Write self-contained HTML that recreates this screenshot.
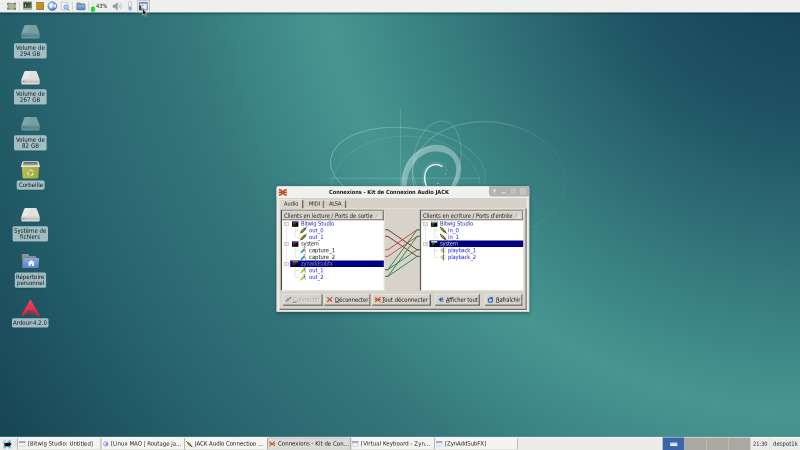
<!DOCTYPE html>
<html lang="fr">
<head>
<meta charset="utf-8">
<title>Connexions - Kit de Connexion Audio JACK</title>
<style>
html,body{margin:0;padding:0;}
body{width:800px;height:450px;overflow:hidden;position:relative;
 font-family:"DejaVu Sans Condensed","DejaVu Sans","Liberation Sans",sans-serif;font-size:5.9px;line-height:1;color:#111;
 background:#2f7478;}
*{box-sizing:border-box;}
.abs{position:absolute;}
svg{display:block;overflow:visible;}
#layer{position:absolute;left:0;top:0;width:800px;height:450px;will-change:transform;}
#bg{position:absolute;left:0;top:0;width:800px;height:450px;background:radial-gradient(circle at 823px -93px,rgb(21,66,86) 38px,rgb(21,67,87) 63px,rgb(22,68,88) 87px,rgb(23,70,90) 112px,rgb(25,73,92) 137px,rgb(26,76,94) 162px,rgb(28,79,96) 186px,rgb(30,82,98) 211px,rgb(33,87,102) 236px,rgb(36,93,106) 261px,rgb(40,99,110) 285px,rgb(44,104,114) 310px,rgb(47,110,118) 335px,rgb(50,116,122) 360px,rgb(54,122,126) 384px,rgb(57,128,130) 409px,rgb(60,134,134) 434px,rgb(64,140,138) 459px,rgb(67,145,141) 483px,rgb(71,150,144) 508px,rgb(68,145,142) 533px,rgb(65,140,139) 558px,rgb(61,135,135) 584px,rgb(58,129,131) 609px,rgb(55,123,126) 634px,rgb(52,118,123) 659px,rgb(49,114,120) 685px,rgb(47,111,118) 710px,rgb(45,108,116) 735px,rgb(43,105,114) 760px,rgb(40,101,111) 786px,rgb(38,97,108) 811px,rgb(35,93,104) 836px,rgb(33,89,101) 861px,rgb(31,84,98) 887px,rgb(29,80,94) 912px,rgb(26,76,91) 937px,rgb(24,71,88) 962px,rgb(22,68,85) 988px,rgb(21,66,83) 1013px,rgb(20,64,82) 1038px);}
#swirl{position:absolute;left:0;top:0;width:800px;height:450px;}
#top{position:absolute;left:0;top:0;width:800px;height:12.4px;background:#efefed;box-shadow:0 0 2px 1px rgba(0,30,40,.55);}
#bot{position:absolute;left:0;top:437px;width:800px;height:13px;background:#efefed;box-shadow:0 0 1px 0 rgba(0,30,40,.4);}
.lbl{position:absolute;background:rgba(205,228,230,.72);border-radius:1.6px;text-align:center;
 font-size:5.5px;line-height:6.6px;color:#10181a;padding-top:1.4px;white-space:nowrap;}
#win{position:absolute;left:0;top:0;width:800px;height:450px;}
.t{position:absolute;line-height:1;white-space:nowrap;transform-origin:0 0;}
.hdr{position:absolute;background:#d6d2ca;border:1px solid #555;border-top-color:#77756f;border-left-color:#f4f4f0;
 font-size:5.33px;padding:2px 0 0 .9px;white-space:nowrap;color:#151515;overflow:hidden;}
.list{position:absolute;background:#fff;}
.row{position:absolute;height:6.67px;white-space:nowrap;font-size:5.33px;line-height:6.67px;}
.btn{position:absolute;background:#d6d2ca;border:1px solid #4a4a48;border-top-color:#fbfbf8;border-left-color:#fbfbf8;
 font-size:5.33px;white-space:nowrap;color:#111;line-height:7.6px;}
.u{text-decoration:underline;text-decoration-thickness:.32px;text-underline-offset:.3px;text-decoration-color:rgba(40,40,40,.6);}
.tk{position:absolute;top:438.2px;height:11.4px;font-size:5.42px;line-height:11.4px;white-space:nowrap;color:#1a1a1a;overflow:hidden;}
</style>
</head>
<body>
<div id="bg"></div>
<div id="layer">
<svg id="swirl" viewBox="0 0 800 450"><defs><linearGradient id="fdR" gradientUnits="userSpaceOnUse" x1="410" y1="0" x2="570" y2="0"><stop offset="0" stop-color="#fff" stop-opacity=".42"/><stop offset=".55" stop-color="#fff" stop-opacity=".30"/><stop offset=".85" stop-color="#fff" stop-opacity=".10"/><stop offset="1" stop-color="#fff" stop-opacity=".05"/></linearGradient><linearGradient id="fdL" gradientUnits="userSpaceOnUse" x1="330" y1="0" x2="490" y2="0"><stop offset="0" stop-color="#fff" stop-opacity=".46"/><stop offset=".5" stop-color="#fff" stop-opacity=".36"/><stop offset="1" stop-color="#fff" stop-opacity=".18"/></linearGradient></defs>
<path d="M400.4 109 V200" stroke="#ffffff" stroke-width=".5" opacity=".30"/>
<path d="M329 178.2 H480" stroke="#ffffff" stroke-width=".5" opacity=".32"/>
<ellipse cx="408" cy="169" rx="78" ry="41" transform="rotate(7 408 169)" fill="none" stroke="url(#fdL)" stroke-width=".6"/>
<ellipse cx="406" cy="186" rx="74" ry="50" fill="none" stroke="#ffffff" stroke-width=".45" opacity=".22"/>
<ellipse cx="489" cy="178" rx="77" ry="56" transform="rotate(6 489 178)" fill="none" stroke="url(#fdR)" stroke-width=".6"/>
<ellipse cx="437" cy="159.5" rx="23.5" ry="39" transform="rotate(11 437 159.5)" fill="none" stroke="#ffffff" stroke-width=".55" opacity=".32"/>
<path d="M401.6 190 C399.6 170 410 149 432 145 C450 142.4 463 157 461 171 C460 180 456.6 186 452.6 190 L448.6 190 C453 184 455.6 178 456.2 170 C456.8 158.6 448 150.2 433 151.6 C416 154 406 172 406.6 190 Z" fill="#ffffff" opacity=".34"/>
<path d="M402.6 182 C403 166 412 151.6 430 147.2" fill="none" stroke="#ffffff" stroke-width="1" opacity=".18"/>
<path d="M428.8 190 C423 182 423.4 171 429.4 166.6 C433.4 163.6 438.6 164 442 166.4" fill="none" stroke="#ffffff" stroke-width="1.5" opacity=".86" stroke-linecap="round"/>
<path d="M426 190 C419 178 424 162 436 162.4 C442 162.8 446 167 447 171" fill="none" stroke="#ffffff" stroke-width=".5" opacity=".35"/>
<circle cx="445.4" cy="174" r=".5" fill="#ffffff" opacity=".7"/><circle cx="438" cy="183.4" r=".6" fill="#ffffff" opacity=".7"/><circle cx="403.4" cy="160.6" r=".4" fill="#ffffff" opacity=".6"/></svg>
<svg class="abs" style="left:20px;top:24.8px" width="21" height="15" viewBox="0 0 21 15">
 <path d="M4.3 .7 Q4.6 0 5.4 0 H15.6 Q16.4 0 16.7 .7 L19.5 8.2 H1.5 Z" fill="#7ca6a9"/>
 <path d="M11 0 H15.6 Q16.4 0 16.7 .7 L19.5 8.2 H7 Z" fill="#6d999c" opacity=".5"/>
 <path d="M1.4 8 H19.6 V12.5 Q19.6 13.5 18.6 13.5 H2.4 Q1.4 13.5 1.4 12.5 Z" fill="#699699"/>
 <rect x="1.4" y="9.5" width="18.2" height="2.5" fill="#55868b" opacity=".8"/>
 <rect x="3" y="10.2" width="1.6" height=".9" fill="#3f6f75"/>
</svg>
<svg class="abs" style="left:0;top:0" width="60" height="340" viewBox="0 0 60 340"><rect x="14.2" y="43.900000000000006" width="32.2" height="15.4" rx="1.6" fill="#0a2c36" fill-opacity=".22"/><rect x="14" y="43.2" width="32.6" height="15.4" rx="1.6" fill="#d0e4e7" fill-opacity=".74"/></svg>
<div class="t" style="left:15.90px;top:43px;line-height:7px;font-size:6.0px;color:#0c1214;transform:translateY(0.70px) rotate(.03deg);letter-spacing:0.034px;">Volume de</div>
<div class="t" style="left:20.10px;top:49px;line-height:7px;font-size:6.0px;color:#0c1214;transform:translateY(0.75px) rotate(.03deg);letter-spacing:0.083px;">294 GB</div>
<svg class="abs" style="left:20px;top:70.8px" width="21" height="15" viewBox="0 0 21 15">
 <path d="M4.3 .7 Q4.6 0 5.4 0 H15.6 Q16.4 0 16.7 .7 L19.5 8.2 H1.5 Z" fill="#e8e8e6"/>
 <path d="M11 0 H15.6 Q16.4 0 16.7 .7 L19.5 8.2 H7 Z" fill="#d8d8d6" opacity=".5"/>
 <path d="M1.4 8 H19.6 V12.5 Q19.6 13.5 18.6 13.5 H2.4 Q1.4 13.5 1.4 12.5 Z" fill="#dadad8"/>
 <rect x="1.4" y="9.5" width="18.2" height="2.5" fill="#bebebc" opacity=".8"/>
 <rect x="3" y="10.2" width="1.6" height=".9" fill="#7a7a78"/>
</svg>
<svg class="abs" style="left:0;top:0" width="60" height="340" viewBox="0 0 60 340"><rect x="14.2" y="89.9" width="32.2" height="15.4" rx="1.6" fill="#0a2c36" fill-opacity=".22"/><rect x="14" y="89.2" width="32.6" height="15.4" rx="1.6" fill="#d0e4e7" fill-opacity=".74"/></svg>
<div class="t" style="left:15.90px;top:89px;line-height:7px;font-size:6.0px;color:#0c1214;transform:translateY(0.70px) rotate(.03deg);letter-spacing:0.034px;">Volume de</div>
<div class="t" style="left:20.10px;top:95px;line-height:7px;font-size:6.0px;color:#0c1214;transform:translateY(0.75px) rotate(.03deg);letter-spacing:0.083px;">267 GB</div>
<svg class="abs" style="left:20px;top:116.8px" width="21" height="15" viewBox="0 0 21 15">
 <path d="M4.3 .7 Q4.6 0 5.4 0 H15.6 Q16.4 0 16.7 .7 L19.5 8.2 H1.5 Z" fill="#7ca6a9"/>
 <path d="M11 0 H15.6 Q16.4 0 16.7 .7 L19.5 8.2 H7 Z" fill="#6d999c" opacity=".5"/>
 <path d="M1.4 8 H19.6 V12.5 Q19.6 13.5 18.6 13.5 H2.4 Q1.4 13.5 1.4 12.5 Z" fill="#699699"/>
 <rect x="1.4" y="9.5" width="18.2" height="2.5" fill="#55868b" opacity=".8"/>
 <rect x="3" y="10.2" width="1.6" height=".9" fill="#3f6f75"/>
</svg>
<svg class="abs" style="left:0;top:0" width="60" height="340" viewBox="0 0 60 340"><rect x="14.2" y="135.89999999999998" width="32.2" height="15.4" rx="1.6" fill="#0a2c36" fill-opacity=".22"/><rect x="14" y="135.2" width="32.6" height="15.4" rx="1.6" fill="#d0e4e7" fill-opacity=".74"/></svg>
<div class="t" style="left:15.90px;top:135px;line-height:7px;font-size:6.0px;color:#0c1214;transform:translateY(0.70px) rotate(.03deg);letter-spacing:0.034px;">Volume de</div>
<div class="t" style="left:21.80px;top:141px;line-height:7px;font-size:6.0px;color:#0c1214;transform:translateY(0.75px) rotate(.03deg);letter-spacing:0.106px;">82 GB</div>
<svg class="abs" style="left:20px;top:160px" width="21" height="20" viewBox="0 0 21 20">
 <defs><linearGradient id="tin" x1="0" y1="0" x2="0" y2="1"><stop offset="0" stop-color="#5c5c5a"/><stop offset="1" stop-color="#b4b4b0"/></linearGradient>
 <linearGradient id="tbd" x1="0" y1="0" x2="1" y2="0"><stop offset="0" stop-color="#b6be52"/><stop offset="1" stop-color="#a2aa3a"/></linearGradient></defs>
 <path d="M1.8 6.6 H19.1 L18.35 17.3 Q18.25 18.5 17.1 18.5 H3.8 Q2.65 18.5 2.55 17.3 Z" fill="url(#tbd)"/>
 <path d="M3.2 1.2 H17.7 Q18.4 1.2 18.6 1.9 L20 6.4 Q20.1 7.1 19.4 7.1 H1.5 Q.8 7.1 .9 6.4 L2.3 1.9 Q2.5 1.2 3.2 1.2 Z" fill="#e6e7dc"/>
 <path d="M3.7 1.9 H17.2 L18.3 5.5 H2.6 Z" fill="url(#tin)"/>
 <circle cx="10.5" cy="12.8" r="2.7" fill="none" stroke="#e6ead0" stroke-width="1.35" stroke-dasharray="3.9 1.75" opacity=".92"/>
</svg>
<svg class="abs" style="left:0;top:0" width="60" height="340" viewBox="0 0 60 340"><rect x="16.9" y="181.1" width="27.5" height="9.3" rx="1.6" fill="#0a2c36" fill-opacity=".22"/><rect x="16.7" y="180.4" width="27.9" height="9.3" rx="1.6" fill="#d0e4e7" fill-opacity=".74"/></svg>
<div class="t" style="left:18.65px;top:180px;line-height:7px;font-size:6.0px;color:#0c1214;transform:translateY(0.90px) rotate(.03deg);letter-spacing:0.015px;">Corbeille</div>
<svg class="abs" style="left:20px;top:208.3px" width="21" height="15" viewBox="0 0 21 15">
 <path d="M4.3 .7 Q4.6 0 5.4 0 H15.6 Q16.4 0 16.7 .7 L19.5 8.2 H1.5 Z" fill="#e8e8e6"/>
 <path d="M11 0 H15.6 Q16.4 0 16.7 .7 L19.5 8.2 H7 Z" fill="#d8d8d6" opacity=".5"/>
 <path d="M1.4 8 H19.6 V12.5 Q19.6 13.5 18.6 13.5 H2.4 Q1.4 13.5 1.4 12.5 Z" fill="#dadad8"/>
 <rect x="1.4" y="9.5" width="18.2" height="2.5" fill="#bebebc" opacity=".8"/>
 <rect x="3" y="10.2" width="1.6" height=".9" fill="#7a7a78"/>
</svg>
<svg class="abs" style="left:0;top:0" width="60" height="340" viewBox="0 0 60 340"><rect x="12.799999999999999" y="226.89999999999998" width="35.0" height="15.4" rx="1.6" fill="#0a2c36" fill-opacity=".22"/><rect x="12.6" y="226.2" width="35.4" height="15.4" rx="1.6" fill="#d0e4e7" fill-opacity=".74"/></svg>
<div class="t" style="left:14.10px;top:226px;line-height:7px;font-size:6.0px;color:#0c1214;transform:translateY(0.70px) rotate(.03deg);letter-spacing:0.048px;">Système de</div>
<div class="t" style="left:20.30px;top:232px;line-height:7px;font-size:6.0px;color:#0c1214;transform:translateY(0.75px) rotate(.03deg);letter-spacing:0.044px;">fichiers</div>
<svg class="abs" style="left:20px;top:252px" width="21" height="18" viewBox="0 0 21 18">
 <defs><linearGradient id="hf" x1="0" y1="0" x2="0" y2="1"><stop offset="0" stop-color="#86ace2"/><stop offset="1" stop-color="#5585cc"/></linearGradient>
 <linearGradient id="hb" x1="0" y1="0" x2="0" y2="1"><stop offset="0" stop-color="#9a9a98"/><stop offset="1" stop-color="#565654"/></linearGradient></defs>
 <path d="M1.9 2.7 Q1.9 1.9 2.7 1.9 H8 Q8.8 1.9 8.9 2.7 L9 3.9 H15.3 Q16.1 3.9 16.1 4.7 V15.7 H1.9 Z" fill="url(#hb)"/>
 <path d="M4 6 H18.6 Q19.2 6 19.15 6.6 L18.5 15.4 Q18.45 16 17.85 16 H2.9 Q2.3 16 2.38 15.4 L3.4 6.6 Q3.45 6 4 6 Z" fill="url(#hf)"/>
 <path d="M11.3 7.9 L15 11 H14 V14 H12 V12.2 H10.6 V14 H8.6 V11 H7.6 Z" fill="#f6f9fe" opacity=".95"/>
</svg>
<svg class="abs" style="left:0;top:0" width="60" height="340" viewBox="0 0 60 340"><rect x="15.0" y="273.09999999999997" width="30.900000000000002" height="15.4" rx="1.6" fill="#0a2c36" fill-opacity=".22"/><rect x="14.8" y="272.4" width="31.3" height="15.4" rx="1.6" fill="#d0e4e7" fill-opacity=".74"/></svg>
<div class="t" style="left:16.25px;top:272px;line-height:7px;font-size:6.0px;color:#0c1214;transform:translateY(0.90px) rotate(.03deg);letter-spacing:0.030px;">Répertoire</div>
<div class="t" style="left:16.85px;top:278px;line-height:7px;font-size:6.0px;color:#0c1214;transform:translateY(0.95px) rotate(.03deg);letter-spacing:0.050px;">personnel</div>
<svg class="abs" style="left:20px;top:298px" width="21" height="19" viewBox="0 0 21 19">
 <defs><linearGradient id="ard" x1="0" y1="0" x2="0" y2="1"><stop offset="0" stop-color="#f0485f"/><stop offset="1" stop-color="#d8213f"/></linearGradient></defs>
 <path d="M10.4 1.2 L19.9 17.7 L17.2 17.7 Q14.6 12.2 10.4 12.2 Q6.2 12.2 3.6 17.7 L.9 17.7 Z" fill="url(#ard)"/>
 <path d="M5.4 16.6 V14 M6.6 15.6 V13 M7.8 16.8 V12.4 M9 15.6 V12.2 M10.2 16.9 V12 M11.4 15.2 V12 M12.6 16.9 V12.2 M13.8 15.6 V12.6 M15 16.6 V13.6" stroke="#d42a4a" stroke-width=".75" opacity=".9"/>
</svg>
<svg class="abs" style="left:0;top:0" width="60" height="340" viewBox="0 0 60 340"><rect x="12.2" y="318.9" width="36.1" height="9.4" rx="1.6" fill="#0a2c36" fill-opacity=".22"/><rect x="12" y="318.2" width="36.5" height="9.4" rx="1.6" fill="#d0e4e7" fill-opacity=".74"/></svg>
<div class="t" style="left:13.25px;top:318px;line-height:7px;font-size:6.0px;color:#0c1214;transform:translateY(0.70px) rotate(.03deg);letter-spacing:0.045px;">Ardour-4.2.0</div>
<svg class="abs" style="left:0;top:0" width="800" height="18" viewBox="0 0 800 18"><defs><linearGradient id="tsh" x1="0" y1="0" x2="0" y2="1"><stop offset="0" stop-color="#062830" stop-opacity=".62"/><stop offset=".45" stop-color="#062830" stop-opacity=".28"/><stop offset="1" stop-color="#062830" stop-opacity="0"/></linearGradient></defs><rect x="0" y="12.3" width="800" height="3.4" fill="url(#tsh)"/><rect x="0" y="0" width="800" height="12.45" fill="#efefed"/></svg>
<svg class="abs" style="left:0;top:0" width="160" height="18" viewBox="0 0 160 18">
 <defs>
  <radialGradient id="glb" cx="40%" cy="35%" r="65%"><stop offset="0" stop-color="#e4effc"/><stop offset=".55" stop-color="#86afe2"/><stop offset="1" stop-color="#3f6fb8"/></radialGradient>
  <linearGradient id="fld" x1="0" y1="0" x2="0" y2="1"><stop offset="0" stop-color="#9dbde6"/><stop offset="1" stop-color="#4f80c4"/></linearGradient>
  <linearGradient id="trm" x1="0" y1="0" x2="1" y2="1"><stop offset="0" stop-color="#1f3a22"/><stop offset="1" stop-color="#4f7a48"/></linearGradient>
 </defs>
 <rect x="2.6" y="3.2" width="1.2" height="1.2" fill="#dcdcda"/><rect x="2.6" y="7.2" width="1.2" height="1.2" fill="#dcdcda"/>
 <rect x="7.1" y="2.8" width="2.4" height="2" rx=".5" fill="#5670a6"/><rect x="13.6" y="2.8" width="2.4" height="2" rx=".5" fill="#5670a6"/><rect x="7.1" y="7.8" width="2.4" height="2" rx=".5" fill="#5670a6"/><rect x="13.6" y="7.8" width="2.4" height="2" rx=".5" fill="#5670a6"/>
 <rect x="8" y="3.5" width="7.1" height="5.6" rx="1.3" fill="#b0b890" stroke="#7d8458" stroke-width=".7"/>
 <rect x="18.9" y="1.5" width=".8" height="9.2" fill="#cfcfcc"/>
 <rect x="72.2" y="1.5" width=".8" height="9.2" fill="#cfcfcc"/>
 <rect x="88" y="1.5" width=".8" height="9.2" fill="#cfcfcc"/>
 <rect x="23" y="1.6" width="9" height="7" rx=".6" fill="#8a8c88"/>
 <rect x="23.9" y="2.6" width="7.2" height="5.2" fill="url(#trm)"/>
 <rect x="25" y="4.6" width=".8" height="2" fill="#d8ead0"/>
 <rect x="23" y="8.4" width="9" height="1.4" fill="#a0a29e"/>
 <rect x="36.2" y="1.9" width="7.8" height="8" rx=".5" fill="#a5832a"/>
 <rect x="37" y="2.7" width="6.2" height="6.4" fill="#b8922f"/>
 <rect x="37.4" y="4.9" width="5.4" height=".7" fill="#d4a02a"/><rect x="37.4" y="7.1" width="5.4" height=".7" fill="#cc982a"/><rect x="37.4" y="5.8" width="5.4" height=".5" fill="#9a7824"/>
 <circle cx="52.3" cy="6.1" r="4.4" fill="url(#glb)" stroke="#3c68b0" stroke-width=".5"/>
 <path d="M49.6 3.4 L53.2 4 L52.4 6.4 L50.6 8.4 L49.2 5.8 Z M53.8 5.2 L55.8 4 L56 7.2 L54.4 7.8 Z" fill="#f6f9fe" opacity=".92"/>
 <rect x="61.2" y="2.2" width="6.6" height="7.6" fill="#f8f8f8" stroke="#b4b4b2" stroke-width=".6"/>
 <circle cx="66" cy="7" r="2.3" fill="#a9c8ec" stroke="#6e9ad2" stroke-width=".7"/>
 <path d="M67.6 8.7 L69.4 10.5" stroke="#777" stroke-width="1"/>
 <path d="M76.6 2.6 h3.6 l.8 1 h4 v6 h-8.4 z" fill="#8e8e8c"/>
 <rect x="76.9" y="4.4" width="8.2" height="5.4" rx=".5" fill="url(#fld)" stroke="#3e6cb0" stroke-width=".5"/>
 <rect x="92.2" y="1.2" width="1.2" height="10" fill="#dededc"/>
 <rect x="90.9" y="6.8" width="4" height="5" rx="1" fill="#19df22"/>
 <path d="M113 5 h1.8 l2.6 -2.4 v7.4 l-2.6 -2.4 h-1.8 z" fill="#9a9a98" stroke="#7e7e7c" stroke-width=".4"/>
 <path d="M119 4.2 q1.6 1.8 0 3.8 M120.4 3.2 q2.4 2.9 0 5.8" stroke="#9db9e2" stroke-width=".8" fill="none"/>
 <rect x="128.6" y="1.4" width="3" height="9.2" rx="1.4" fill="#f4f4f4" stroke="#a8a8a6" stroke-width=".6"/>
 <rect x="129.3" y="6.2" width="1.6" height="3.8" rx=".7" fill="#5a8ed6"/>
 <rect x="137.2" y="0" width="12.8" height="12.4" fill="#bdbdbb"/>
 <rect x="138" y=".6" width="11.2" height="11.4" fill="#e3e3e1"/>
 <rect x="139.2" y="2.2" width="8.4" height="8" fill="#4c7cc0"/>
 <rect x="140" y="3.6" width="6.8" height="5.8" fill="#e8e8e6"/>
 <rect x="139.2" y="5.6" width="4.6" height="4.6" fill="#3b3f44"/>
 <rect x="141.2" y="6" width="4" height="2.6" fill="#f4f4f4"/>
 <circle cx="142.4" cy="8.4" r="1.1" fill="#88a4cc"/>
 <path d="M142.6 8.8 L142.6 15.2 L144 13.9 L145.1 16.2 L146.2 15.7 L145.1 13.5 L147 13.4 Z" fill="#0a0a0a" stroke="#f4f4f4" stroke-width=".5"/>
</svg>
<div class="t" style="left:95.60px;top:3px;line-height:6px;font-size:5.7px;color:#1c1c1c;transform:translateY(0.00px) rotate(.03deg);letter-spacing:-0.032px;">43%</div>

<svg class="abs" style="left:0;top:432px" width="800" height="18" viewBox="0 0 800 18"><rect x="0" y="4.4" width="800" height=".6" fill="#0a3038" opacity=".35"/><rect x="0" y="4.9" width="800" height="13.1" fill="#ececea"/><rect x="0" y="4.9" width="800" height=".6" fill="#fbfbfa"/></svg>
<svg class="abs" style="left:1.8px;top:438.9px" width="10.8" height="10.8" viewBox="0 0 10.4 10.4">
 <path d="M1.8 1.6 L8.2 8.8 M8 1.6 L1.8 8.8" stroke="#6cc4ea" stroke-width="2.5" stroke-linecap="butt"/>
 <path d="M1.4 1.6 L4.6 4.4" stroke="#c6e6f6" stroke-width="1.6"/>
 <path d="M.8 3 L2.6 4.4 Q3.4 3.6 5 3.9 L6.6 3.9 L7.4 2.8 L8 3.9 Q8.8 4.2 9.4 5.3 L8.2 5.6 L7.8 7 H2.8 Q2 6 2.4 5 Z" fill="#060606"/>
</svg>
<svg class="abs" style="left:14.8px;top:440.8px" width="2" height="6" viewBox="0 0 2 6"><rect x=".2" y="0" width="1.3" height="5.6" fill="#d6d6d3"/></svg>
<svg class="abs" style="left:0;top:0" width="800" height="450" viewBox="0 0 800 450"><rect x="17.70" y="437.7" width="83.30" height="12.3" fill="#f4f4f2"/><rect x="17.48" y="438" width=".45" height="11.4" fill="#7e7e7c"/><rect x="100.78" y="438" width=".45" height="11.4" fill="#7e7e7c"/><rect x="17.70" y="449.2" width="83.30" height=".5" fill="#cfcfcc"/></svg>
<svg class="abs" style="left:19.00px;top:440.6px" width="6.4" height="6" viewBox="0 0 6.4 6"><rect x=".3" y=".3" width="5.8" height="5.4" fill="#efefed" stroke="#c2c6cc" stroke-width=".5"/><rect x=".2" y=".2" width="6" height="1.7" fill="#8ea6d2"/></svg>
<div class="t" style="left:28.10px;top:439px;line-height:7px;font-size:6.0px;color:#161616;transform:translateY(0.60px) rotate(.03deg);letter-spacing:0.013px;">[Bitwig Studio: Untitled]</div>
<svg class="abs" style="left:0;top:0" width="800" height="450" viewBox="0 0 800 450"><rect x="101.00" y="437.7" width="83.30" height="12.3" fill="#f4f4f2"/><rect x="100.78" y="438" width=".45" height="11.4" fill="#7e7e7c"/><rect x="184.08" y="438" width=".45" height="11.4" fill="#7e7e7c"/><rect x="101.00" y="449.2" width="83.30" height=".5" fill="#cfcfcc"/></svg>
<svg class="abs" style="left:102.60px;top:441.2px" width="5.6" height="5.6" viewBox="0 0 5.6 5.6"><circle cx="2.8" cy="2.8" r="2.6" fill="#9c9cea"/><path d="M1 2.2 Q2.4 .6 3.6 1.6 Q3 3.6 1.8 4.4 Q.8 3.6 1 2.2 Z" fill="#ececfb"/><circle cx="4" cy="3" r=".9" fill="#7c7ce0"/></svg>
<div class="t" style="left:111.00px;top:439px;line-height:7px;font-size:6.0px;color:#161616;transform:translateY(0.60px) rotate(.03deg);letter-spacing:0.004px;">[Linux MAO | Routage ja...</div>
<svg class="abs" style="left:0;top:0" width="800" height="450" viewBox="0 0 800 450"><rect x="184.30" y="437.7" width="83.30" height="12.3" fill="#f4f4f2"/><rect x="184.08" y="438" width=".45" height="11.4" fill="#7e7e7c"/><rect x="267.38" y="438" width=".45" height="11.4" fill="#7e7e7c"/><rect x="184.30" y="449.2" width="83.30" height=".5" fill="#cfcfcc"/></svg>
<svg class="abs" style="left:185.80px;top:440.6px" width="6.6" height="6.4" viewBox="0 0 6.6 6.4"><path d="M.3 .3 L1.8 1.8" stroke="#222" stroke-width=".8"/><path d="M1.8 1.8 L4.4 4.2" stroke="#8a7a30" stroke-width="1.9" stroke-linecap="round"/><path d="M4.4 4.2 L6.4 6.2" stroke="#222" stroke-width=".9"/></svg>
<div class="t" style="left:194.75px;top:439px;line-height:7px;font-size:6.0px;color:#161616;transform:translateY(0.60px) rotate(.03deg);letter-spacing:-0.008px;">JACK Audio Connection ...</div>
<svg class="abs" style="left:0;top:0" width="800" height="450" viewBox="0 0 800 450"><rect x="267.60" y="437.7" width="83.30" height="12.3" fill="#dbdbd8"/><rect x="267.38" y="438" width=".45" height="11.4" fill="#7e7e7c"/><rect x="350.68" y="438" width=".45" height="11.4" fill="#7e7e7c"/><rect x="267.60" y="449.2" width="83.30" height=".5" fill="#cfcfcc"/><rect x="267.80" y="437.7" width="82.90" height=".6" fill="#b4b4b1"/></svg>
<svg class="abs" style="left:269.00px;top:440.8px" width="6.4" height="5.6" viewBox="0 0 9 7.4"><path d="M.6 1 Q3 1 4.5 3.7 Q6 1 8.4 1 M.6 6.4 Q3 6.4 4.5 3.7 Q6 6.4 8.4 6.4 M.4 3.7 H8.6" stroke="#d04a12" stroke-width="1.35" fill="none"/></svg>
<div class="t" style="left:277.50px;top:439px;line-height:7px;font-size:6.0px;color:#161616;transform:translateY(0.60px) rotate(.03deg);letter-spacing:0.046px;">Connexions - Kit de Con...</div>
<svg class="abs" style="left:0;top:0" width="800" height="450" viewBox="0 0 800 450"><rect x="350.90" y="437.7" width="83.30" height="12.3" fill="#f4f4f2"/><rect x="350.68" y="438" width=".45" height="11.4" fill="#7e7e7c"/><rect x="433.98" y="438" width=".45" height="11.4" fill="#7e7e7c"/><rect x="350.90" y="449.2" width="83.30" height=".5" fill="#cfcfcc"/></svg>
<svg class="abs" style="left:352.20px;top:440.6px" width="6.4" height="6" viewBox="0 0 6.4 6"><rect x=".3" y=".3" width="5.8" height="5.4" fill="#efefed" stroke="#c2c6cc" stroke-width=".5"/><rect x=".2" y=".2" width="6" height="1.7" fill="#8ea6d2"/></svg>
<div class="t" style="left:361.20px;top:439px;line-height:7px;font-size:6.0px;color:#161616;transform:translateY(0.60px) rotate(.03deg);letter-spacing:0.061px;">[Virtual Keyboard - Zyn...</div>
<svg class="abs" style="left:0;top:0" width="800" height="450" viewBox="0 0 800 450"><rect x="434.20" y="437.7" width="83.30" height="12.3" fill="#f4f4f2"/><rect x="433.98" y="438" width=".45" height="11.4" fill="#7e7e7c"/><rect x="517.28" y="438" width=".45" height="11.4" fill="#7e7e7c"/><rect x="434.20" y="449.2" width="83.30" height=".5" fill="#cfcfcc"/></svg>
<svg class="abs" style="left:435.50px;top:440.6px" width="6.4" height="6" viewBox="0 0 6.4 6"><rect x=".3" y=".3" width="5.8" height="5.4" fill="#efefed" stroke="#c2c6cc" stroke-width=".5"/><rect x=".2" y=".2" width="6" height="1.7" fill="#8ea6d2"/></svg>
<div class="t" style="left:445.00px;top:439px;line-height:7px;font-size:6.0px;color:#161616;transform:translateY(0.60px) rotate(.03deg);letter-spacing:-0.081px;">[ZynAddSubFX]</div>
<svg class="abs" style="left:0;top:432px" width="800" height="18" viewBox="0 432 800 18"><rect x="662.75" y="437.55" width="87.60" height="12.5" fill="#a9a8a1"/><rect x="662.75" y="437.55" width="21.60" height="12.5" fill="#3c64a8"/><rect x="684.35" y="437.55" width=".55" height="12.5" fill="#c9c8c1"/><rect x="706.25" y="437.55" width=".55" height="12.5" fill="#c9c8c1"/><rect x="728.15" y="437.55" width=".55" height="12.5" fill="#c9c8c1"/><rect x="670.2" y="442.7" width="7.1" height="3.4" fill="#e4ecf9"/><rect x="670.2" y="442.7" width="7.1" height=".9" fill="#a9c3ee"/></svg>
<div class="t" style="left:752.70px;top:440px;line-height:6px;font-size:5.6px;color:#1c1c1c;transform:translateY(0.70px) rotate(.03deg);letter-spacing:0.017px;">21:30</div>
<svg class="abs" style="left:769px;top:438px" width="3" height="12" viewBox="0 0 3 12"><rect x=".5" y=".2" width="1.7" height="12" rx=".6" fill="#f8f8f6" stroke="#c4c4c1" stroke-width=".4"/></svg>
<div class="t" style="left:773.30px;top:439px;line-height:7px;font-size:5.93px;color:#1c1c1c;transform:translateY(0.70px) rotate(.03deg);letter-spacing:0.015px;">despot1k</div>
<div id="win">
<div class="abs" style="left:276.6px;top:186px;width:252.60px;height:125.70px;border-radius:2px 2px 0 0;box-shadow:0 1px 4px rgba(0,20,30,.45)"></div>
<svg class="abs" style="left:0;top:0" width="800" height="450" viewBox="0 0 800 450">
<path d="M276.6 311.7 V188 Q276.6 186 278.6 186 H527.2 Q529.2 186 529.2 188 V311.7 Z" fill="#ecece9"/>
<path d="M276.6 198 V188 Q276.6 186 278.6 186 H527.2 Q529.2 186 529.2 188 V198 Z" fill="#f0f0ee"/>
<rect x="278.20" y="186.00" width="249.40" height="0.60" fill="#d6d6d3"/>
<rect x="276.60" y="188.00" width="0.60" height="123.70" fill="#cfcfcb"/>
<rect x="528.60" y="197.00" width="0.60" height="114.70" fill="#d6d6d2"/>
<rect x="276.60" y="311.10" width="252.60" height="0.60" fill="#d6d6d2"/>
<path d="M489 186 H527.2 Q529.2 186 529.2 188 V196.5 H492 Q489 196.5 489 193.5 Z" fill="#b3b3af"/>
<g transform="translate(489 186)"><circle cx="5.6" cy="4.5" r="1.4" fill="#dededc"/><path d="M5.6 5.4 V6.8" stroke="#dededc" stroke-width=".7"/><rect x="12.6" y="6.2" width="4" height="1.2" fill="#e6e6e4"/><path d="M22.4 3.4 H26.4 V7.4 H22.4 Z M23.2 4.2 L25.6 6.6 M25.6 4.2 L23.2 6.6" stroke="#d8d8d6" stroke-width=".6" fill="none"/><path d="M31.4 3.2 H36.2 V7.8 H31.4 Z M32.4 4.2 L35.2 6.8 M35.2 4.2 L32.4 6.8" stroke="#dcdcda" stroke-width=".7" fill="none"/></g>
<rect x="279.20" y="198.00" width="247.50" height="111.85" fill="#d5d1c9" />
<rect x="279.20" y="208.00" width="247.50" height="101.85" fill="#d7d3cb" />
<rect x="303.00" y="207.97" width="223.00" height="0.45" fill="#eceae4"/>
<rect x="525.68" y="208.40" width="0.85" height="101.40" fill="#5a5a55"/>
<rect x="279.40" y="308.97" width="247.10" height="0.85" fill="#5a5a55"/>
<rect x="525.25" y="208.60" width="0.40" height="100.40" fill="#9a9890"/>
<rect x="279.80" y="308.55" width="245.80" height="0.40" fill="#9a9890"/>
<rect x="279.27" y="208.00" width="0.45" height="101.40" fill="#f2f0ea"/>
<rect x="279.80" y="199.50" width="22.50" height="9.10" fill="#dad6ce" />
<rect x="279.72" y="199.60" width="0.45" height="8.80" fill="#faf9f5"/>
<rect x="279.80" y="199.47" width="22.40" height="0.45" fill="#faf9f5"/>
<rect x="302.18" y="200.20" width="1.05" height="7.90" fill="#55534e"/>
<rect x="303.25" y="200.60" width="0.50" height="7.50" fill="#a09e96"/>
<rect x="322.82" y="200.80" width="0.95" height="7.10" fill="#55534e"/>
<rect x="323.77" y="201.00" width="0.45" height="6.90" fill="#a09e96"/>
<rect x="344.92" y="200.80" width="0.95" height="7.10" fill="#55534e"/>
<rect x="345.88" y="201.00" width="0.45" height="6.90" fill="#a09e96"/>
<rect x="304.40" y="200.50" width="18.20" height="0.40" fill="#f0eee8"/>
<rect x="325.00" y="200.50" width="19.80" height="0.40" fill="#f0eee8"/>
<rect x="280.62" y="210.00" width="0.45" height="80.80" fill="#8c8a84"/>
<rect x="280.70" y="209.75" width="103.70" height="0.40" fill="#8c8a84"/>
<rect x="281.10" y="210.10" width="1.00" height="80.30" fill="#3c3a36"/>
<rect x="281.20" y="210.10" width="102.80" height="0.70" fill="#5c5a55"/>
<rect x="282.10" y="210.80" width="101.70" height="9.60" fill="#d6d2ca" />
<rect x="282.10" y="210.85" width="101.10" height="0.40" fill="#f4f2ec"/>
<rect x="282.15" y="210.80" width="0.40" height="8.80" fill="#f4f2ec"/>
<rect x="282.10" y="219.50" width="101.70" height="0.90" fill="#55534e"/>
<rect x="383.00" y="210.90" width="0.80" height="9.50" fill="#55534e"/>
<rect x="282.60" y="219.10" width="100.40" height="0.40" fill="#8e8c85"/>
<rect x="382.60" y="211.30" width="0.40" height="8.30" fill="#8e8c85"/>
<rect x="282.10" y="220.40" width="101.70" height="69.95" fill="#ffffff" />
<rect x="383.85" y="210.20" width="0.80" height="80.70" fill="#e7e4dd"/>
<rect x="281.10" y="290.35" width="103.50" height="0.70" fill="#e7e4dd"/>
<path d="M375.80 217.5 L378.20 213.6" stroke="#8a8882" stroke-width=".5" fill="none"/><path d="M378.20 213.6 L380.60 217.5 H375.80" stroke="#fbfaf6" stroke-width=".5" fill="none"/>
<rect x="419.77" y="210.00" width="0.45" height="80.80" fill="#8c8a84"/>
<rect x="419.85" y="209.75" width="103.95" height="0.40" fill="#8c8a84"/>
<rect x="420.25" y="210.10" width="1.00" height="80.30" fill="#3c3a36"/>
<rect x="420.35" y="210.10" width="103.05" height="0.70" fill="#5c5a55"/>
<rect x="421.25" y="210.80" width="101.95" height="9.60" fill="#d6d2ca" />
<rect x="421.25" y="210.85" width="101.35" height="0.40" fill="#f4f2ec"/>
<rect x="421.30" y="210.80" width="0.40" height="8.80" fill="#f4f2ec"/>
<rect x="421.25" y="219.50" width="101.95" height="0.90" fill="#55534e"/>
<rect x="522.40" y="210.90" width="0.80" height="9.50" fill="#55534e"/>
<rect x="421.75" y="219.10" width="100.65" height="0.40" fill="#8e8c85"/>
<rect x="522.00" y="211.30" width="0.40" height="8.30" fill="#8e8c85"/>
<rect x="421.25" y="220.40" width="101.95" height="69.95" fill="#ffffff" />
<rect x="523.25" y="210.20" width="0.80" height="80.70" fill="#e7e4dd"/>
<rect x="420.25" y="290.35" width="103.75" height="0.70" fill="#e7e4dd"/>
<path d="M515.20 217.5 L517.60 213.6" stroke="#8a8882" stroke-width=".5" fill="none"/><path d="M517.60 213.6 L520.00 217.5 H515.20" stroke="#fbfaf6" stroke-width=".5" fill="none"/>
<rect x="290.20" y="260.50" width="93.60" height="6.52" fill="#000080" />
<rect x="429.50" y="240.50" width="93.70" height="6.52" fill="#000080" />
<rect x="286.19" y="225.85" width="0.42" height="36.00" fill="#c9c9c9"/>
<rect x="294.89" y="226.65" width="0.42" height="10.53" fill="#c9c9c9"/>
<rect x="295.10" y="230.31" width="4.60" height="0.42" fill="#c9c9c9"/>
<rect x="295.10" y="236.97" width="4.60" height="0.42" fill="#c9c9c9"/>
<rect x="284.30" y="222.30" width="4.3" height="3.4" fill="#fff" stroke="#b2b2b2" stroke-width=".6"/><path d="M285.50 224.00 H287.40" stroke="#5a5a5a" stroke-width=".42"/>
<rect x="294.89" y="246.65" width="0.42" height="10.53" fill="#c9c9c9"/>
<rect x="295.10" y="250.31" width="4.60" height="0.42" fill="#c9c9c9"/>
<rect x="295.10" y="256.98" width="4.60" height="0.42" fill="#c9c9c9"/>
<rect x="284.30" y="242.30" width="4.3" height="3.4" fill="#fff" stroke="#b2b2b2" stroke-width=".6"/><path d="M285.50 244.00 H287.40" stroke="#5a5a5a" stroke-width=".42"/>
<rect x="294.89" y="266.65" width="0.42" height="10.53" fill="#c9c9c9"/>
<rect x="295.10" y="270.31" width="4.60" height="0.42" fill="#c9c9c9"/>
<rect x="295.10" y="276.98" width="4.60" height="0.42" fill="#c9c9c9"/>
<rect x="284.30" y="262.30" width="4.3" height="3.4" fill="#fff" stroke="#b2b2b2" stroke-width=".6"/><path d="M285.50 264.00 H287.40" stroke="#5a5a5a" stroke-width=".42"/>
<rect x="425.39" y="225.85" width="0.42" height="16.00" fill="#c9c9c9"/>
<rect x="434.09" y="226.65" width="0.42" height="10.53" fill="#c9c9c9"/>
<rect x="434.30" y="230.31" width="4.60" height="0.42" fill="#c9c9c9"/>
<rect x="434.30" y="236.97" width="4.60" height="0.42" fill="#c9c9c9"/>
<rect x="423.50" y="222.30" width="4.3" height="3.4" fill="#fff" stroke="#b2b2b2" stroke-width=".6"/><path d="M424.70 224.00 H426.60" stroke="#5a5a5a" stroke-width=".42"/>
<rect x="434.09" y="246.65" width="0.42" height="10.53" fill="#c9c9c9"/>
<rect x="434.30" y="250.31" width="4.60" height="0.42" fill="#c9c9c9"/>
<rect x="434.30" y="256.98" width="4.60" height="0.42" fill="#c9c9c9"/>
<rect x="423.50" y="242.30" width="4.3" height="3.4" fill="#fff" stroke="#b2b2b2" stroke-width=".6"/><path d="M424.70 244.00 H426.60" stroke="#5a5a5a" stroke-width=".42"/>
<path d="M385.3 229.72 H387.90 L417.10 249.72 H419.7" stroke="#7a3030" fill="none" stroke-width=".95"/>
<path d="M385.3 236.38 H387.90 L417.10 256.38 H419.7" stroke="#7a3030" fill="none" stroke-width=".95"/>
<path d="M385.3 249.72 H387.90 L417.10 229.72 H419.7" stroke="#c44444" fill="none" stroke-width=".95"/>
<path d="M385.3 256.38 H387.90 L417.10 236.38 H419.7" stroke="#c44444" fill="none" stroke-width=".95"/>
<path d="M385.3 269.72 H387.90 L417.10 229.72 H419.7" stroke="#2f7f45" fill="none" stroke-width=".95"/>
<path d="M385.3 269.72 H387.90 L417.10 249.72 H419.7" stroke="#2f7f45" fill="none" stroke-width=".95"/>
<path d="M385.3 276.39 H387.90 L417.10 236.38 H419.7" stroke="#2f7f45" fill="none" stroke-width=".95"/>
<path d="M385.3 276.39 H387.90 L417.10 256.38 H419.7" stroke="#2f7f45" fill="none" stroke-width=".95"/>
<rect x="282.90" y="294.30" width="39.60" height="11.30" fill="#d6d2ca" />
<rect x="282.90" y="294.27" width="39.20" height="0.45" fill="#fcfcf9"/>
<rect x="282.87" y="294.30" width="0.45" height="10.90" fill="#fcfcf9"/>
<rect x="282.90" y="304.80" width="39.60" height="0.80" fill="#4a4a47"/>
<rect x="321.70" y="294.30" width="0.80" height="11.30" fill="#4a4a47"/>
<rect x="283.40" y="304.40" width="38.30" height="0.40" fill="#8e8c85"/>
<rect x="321.30" y="294.80" width="0.40" height="10.00" fill="#8e8c85"/>
<rect x="324.20" y="294.30" width="46.10" height="11.30" fill="#d6d2ca" />
<rect x="324.20" y="294.27" width="45.70" height="0.45" fill="#fcfcf9"/>
<rect x="324.17" y="294.30" width="0.45" height="10.90" fill="#fcfcf9"/>
<rect x="324.20" y="304.80" width="46.10" height="0.80" fill="#4a4a47"/>
<rect x="369.50" y="294.30" width="0.80" height="11.30" fill="#4a4a47"/>
<rect x="324.70" y="304.40" width="44.80" height="0.40" fill="#8e8c85"/>
<rect x="369.10" y="294.80" width="0.40" height="10.00" fill="#8e8c85"/>
<rect x="372.10" y="294.30" width="58.60" height="11.30" fill="#d6d2ca" />
<rect x="372.10" y="294.27" width="58.20" height="0.45" fill="#fcfcf9"/>
<rect x="372.07" y="294.30" width="0.45" height="10.90" fill="#fcfcf9"/>
<rect x="372.10" y="304.80" width="58.60" height="0.80" fill="#4a4a47"/>
<rect x="429.90" y="294.30" width="0.80" height="11.30" fill="#4a4a47"/>
<rect x="372.60" y="304.40" width="57.30" height="0.40" fill="#8e8c85"/>
<rect x="429.50" y="294.80" width="0.40" height="10.00" fill="#8e8c85"/>
<rect x="435.10" y="294.30" width="44.60" height="11.30" fill="#d6d2ca" />
<rect x="435.10" y="294.27" width="44.20" height="0.45" fill="#fcfcf9"/>
<rect x="435.07" y="294.30" width="0.45" height="10.90" fill="#fcfcf9"/>
<rect x="435.10" y="304.80" width="44.60" height="0.80" fill="#4a4a47"/>
<rect x="478.90" y="294.30" width="0.80" height="11.30" fill="#4a4a47"/>
<rect x="435.60" y="304.40" width="43.30" height="0.40" fill="#8e8c85"/>
<rect x="478.50" y="294.80" width="0.40" height="10.00" fill="#8e8c85"/>
<rect x="485.00" y="294.30" width="37.30" height="11.30" fill="#d6d2ca" />
<rect x="485.00" y="294.27" width="36.90" height="0.45" fill="#fcfcf9"/>
<rect x="484.97" y="294.30" width="0.45" height="10.90" fill="#fcfcf9"/>
<rect x="485.00" y="304.80" width="37.30" height="0.80" fill="#4a4a47"/>
<rect x="521.50" y="294.30" width="0.80" height="11.30" fill="#4a4a47"/>
<rect x="485.50" y="304.40" width="36.00" height="0.40" fill="#8e8c85"/>
<rect x="521.10" y="294.80" width="0.40" height="10.00" fill="#8e8c85"/>
<g transform="translate(285.6 296.6)"><path d="M.3 4.9 L5.5 .5" stroke="#8a8882" stroke-width="1.25" fill="none"/><path d="M1.6 1.6 L3.4 4.2" stroke="#9a9892" stroke-width=".9" fill="none"/></g>
<g transform="translate(326.8 296.8)"><path d="M.6 .7 L5.2 4.9 M5.3 .5 L.5 5" stroke="#cc4416" stroke-width="1.1" fill="none"/></g>
<g transform="translate(374.6 296.6)"><path d="M.6 .8 L5.8 5.2 M5.8 .8 L.6 5.2" stroke="#cc4416" stroke-width="1.1" fill="none"/><path d="M.2 3 H2 M4.4 3 H6.2" stroke="#b43010" stroke-width=".8"/></g>
<g transform="translate(438.4 297.2)"><path d="M.2 2.4 L2.6 .2 V4.6 Z" fill="#1c64c8"/><path d="M2.4 .9 H4.8 M2.4 3.9 H4.8 M2.4 2.4 H5" stroke="#1c64c8" stroke-width=".95"/></g>
<g transform="translate(487.4 296.4)"><circle cx="3" cy="3.8" r="2.1" fill="none" stroke="#1c64c8" stroke-width="1.15"/><path d="M3 .3 L5.6 .5 L4.4 2.6 Z" fill="#1c64c8"/></g>
<g transform="translate(278.3 188.7)"><path d="M.6 1 Q3 1 4.5 3.7 Q6 1 8.4 1 M.6 6.4 Q3 6.4 4.5 3.7 Q6 6.4 8.4 6.4 M.4 3.7 H8.6" stroke="#7a3210" stroke-width="1.9" fill="none" opacity=".45"/><path d="M.6 1 Q3 1 4.5 3.7 Q6 1 8.4 1 M.6 6.4 Q3 6.4 4.5 3.7 Q6 6.4 8.4 6.4 M.4 3.7 H8.6" stroke="#d04a12" stroke-width="1.3" fill="none"/></g>
</svg>
<div class="t" style="left:329.20px;top:189px;line-height:6px;font-size:5.6px;color:#151515;transform:translateY(0.00px) rotate(.03deg);font-weight:bold;letter-spacing:0.003px;">Connexions - Kit de Connexion Audio JACK</div>
<div class="t" style="left:283.70px;top:200px;line-height:6px;font-size:5.6px;color:#1c1c1c;transform:translateY(0.60px) rotate(.03deg);letter-spacing:0.016px;">Audio</div>
<div class="t" style="left:308.50px;top:200px;line-height:6px;font-size:5.6px;color:#1c1c1c;transform:translateY(0.60px) rotate(.03deg);letter-spacing:-0.024px;">MIDI</div>
<div class="t" style="left:329.00px;top:200px;line-height:6px;font-size:5.6px;color:#1c1c1c;transform:translateY(0.60px) rotate(.03deg);letter-spacing:-0.200px;">ALSA</div>
<div class="t" style="left:283.90px;top:212px;line-height:6px;font-size:5.85px;color:#151515;transform:translateY(0.75px) rotate(.03deg);letter-spacing:-0.010px;">Clients en lecture / Ports de sortie</div>
<div class="t" style="left:423.20px;top:212px;line-height:6px;font-size:5.85px;color:#151515;transform:translateY(0.75px) rotate(.03deg);letter-spacing:-0.017px;">Clients en ecriture / Ports d'entrée</div>
<svg class="abs" style="left:292.00px;top:221.00px" width="6.4" height="5.8" viewBox="0 0 6.4 5.8"><rect x="0" y="0" width="6.4" height="5.8" fill="#08080a"/><rect x=".2" y="0" width="4.9" height="1.6" fill="#5868d0"/><rect x="5.3" y=".3" width=".8" height=".9" fill="#e8e8f4"/><rect x=".8" y="2.5" width="2.9" height=".8" fill="#ee3420"/><rect x=".8" y="3.8" width="1.5" height=".7" fill="#b82818"/></svg>
<div class="t" style="left:301.00px;top:220px;line-height:6px;font-size:5.85px;color:#2828a8;transform:translateY(0.55px) rotate(.03deg);letter-spacing:-0.114px;">Bitwig Studio</div>
<svg class="abs" style="left:300.40px;top:227.02px" width="7" height="6.6" viewBox="0 0 7 6.6"><path d="M.2 6.4 L2 4.6" stroke="#222" stroke-width=".8"/><path d="M1.7 4.9 L4.6 2" stroke="#34320e" stroke-width="2.3" stroke-linecap="round"/><path d="M1.7 4.9 L4.6 2" stroke="#969020" stroke-width="1.5" stroke-linecap="round"/><path d="M4.6 2 L6.7 0" stroke="#1c1c1c" stroke-width=".9"/></svg>
<div class="t" style="left:309.00px;top:227px;line-height:6px;font-size:5.85px;color:#1c1cf0;transform:translateY(0.22px) rotate(.03deg);">out_0</div>
<svg class="abs" style="left:300.40px;top:233.68px" width="7" height="6.6" viewBox="0 0 7 6.6"><path d="M.2 6.4 L2 4.6" stroke="#222" stroke-width=".8"/><path d="M1.7 4.9 L4.6 2" stroke="#34320e" stroke-width="2.3" stroke-linecap="round"/><path d="M1.7 4.9 L4.6 2" stroke="#969020" stroke-width="1.5" stroke-linecap="round"/><path d="M4.6 2 L6.7 0" stroke="#1c1c1c" stroke-width=".9"/></svg>
<div class="t" style="left:309.00px;top:233px;line-height:6px;font-size:5.85px;color:#1c1cf0;transform:translateY(0.88px) rotate(.03deg);">out_1</div>
<svg class="abs" style="left:292.00px;top:241.00px" width="6.4" height="5.8" viewBox="0 0 6.4 5.8"><rect x="0" y="0" width="6.4" height="5.8" fill="#08080a"/><rect x=".2" y="0" width="4.9" height="1.6" fill="#5868d0"/><rect x="5.3" y=".3" width=".8" height=".9" fill="#e8e8f4"/><rect x=".8" y="2.5" width="2.9" height=".8" fill="#ee3420"/><rect x=".8" y="3.8" width="1.5" height=".7" fill="#b82818"/></svg>
<div class="t" style="left:301.00px;top:240px;line-height:6px;font-size:5.85px;color:#202020;transform:translateY(0.55px) rotate(.03deg);letter-spacing:-0.205px;">system</div>
<svg class="abs" style="left:300.40px;top:247.02px" width="7" height="6.6" viewBox="0 0 7 6.6"><path d="M.2 6.4 L2 4.6" stroke="#555" stroke-width=".6"/><path d="M1.8 4.8 L4 2.6" stroke="#1f9aa8" stroke-width="1.7" stroke-linecap="round"/><path d="M4 2.6 L5 1.6" stroke="#cfd8a0" stroke-width="1.2"/><path d="M4.6 1.8 L5.4 5.6 M3.4 .8 L5.6 .8" stroke="#333" stroke-width=".5"/></svg>
<div class="t" style="left:309.00px;top:247px;line-height:6px;font-size:5.85px;color:#101010;transform:translateY(0.22px) rotate(.03deg);">capture_1</div>
<svg class="abs" style="left:300.40px;top:253.69px" width="7" height="6.6" viewBox="0 0 7 6.6"><path d="M.2 6.4 L2 4.6" stroke="#555" stroke-width=".6"/><path d="M1.8 4.8 L4 2.6" stroke="#1f9aa8" stroke-width="1.7" stroke-linecap="round"/><path d="M4 2.6 L5 1.6" stroke="#cfd8a0" stroke-width="1.2"/><path d="M4.6 1.8 L5.4 5.6 M3.4 .8 L5.6 .8" stroke="#333" stroke-width=".5"/></svg>
<div class="t" style="left:309.00px;top:253px;line-height:6px;font-size:5.85px;color:#101010;transform:translateY(0.88px) rotate(.03deg);">capture_2</div>
<svg class="abs" style="left:292.00px;top:261.00px" width="6.4" height="5.8" viewBox="0 0 6.4 5.8"><rect x="0" y="0" width="6.4" height="5.8" fill="#08080a"/><rect x=".2" y="0" width="4.9" height="1.6" fill="#5868d0"/><rect x="5.3" y=".3" width=".8" height=".9" fill="#e8e8f4"/><rect x=".8" y="2.5" width="2.9" height=".8" fill="#ee3420"/><rect x=".8" y="3.8" width="1.5" height=".7" fill="#b82818"/></svg>
<div class="t" style="left:301.00px;top:260px;line-height:6px;font-size:5.85px;color:#8c8cd0;transform:translateY(0.55px) rotate(.03deg);letter-spacing:-0.173px;">zynaddsubfx</div>
<svg class="abs" style="left:300.40px;top:267.02px" width="7" height="6.6" viewBox="0 0 7 6.6"><path d="M.2 6.4 L2 4.6" stroke="#555" stroke-width=".6"/><path d="M1.8 4.8 L4.2 2.4" stroke="#b9c21a" stroke-width="1.8" stroke-linecap="round"/><path d="M4.2 2.4 L5 1.6" stroke="#3aa0b0" stroke-width="1.2"/><path d="M4.6 1.8 L5.4 5.6 M3.4 .8 L5.6 .8" stroke="#333" stroke-width=".5"/></svg>
<div class="t" style="left:309.00px;top:267px;line-height:6px;font-size:5.85px;color:#1c1cf0;transform:translateY(0.22px) rotate(.03deg);">out_1</div>
<svg class="abs" style="left:300.40px;top:273.69px" width="7" height="6.6" viewBox="0 0 7 6.6"><path d="M.2 6.4 L2 4.6" stroke="#555" stroke-width=".6"/><path d="M1.8 4.8 L4.2 2.4" stroke="#b9c21a" stroke-width="1.8" stroke-linecap="round"/><path d="M4.2 2.4 L5 1.6" stroke="#3aa0b0" stroke-width="1.2"/><path d="M4.6 1.8 L5.4 5.6 M3.4 .8 L5.6 .8" stroke="#333" stroke-width=".5"/></svg>
<div class="t" style="left:309.00px;top:273px;line-height:6px;font-size:5.85px;color:#1c1cf0;transform:translateY(0.89px) rotate(.03deg);">out_2</div>
<svg class="abs" style="left:431.20px;top:221.00px" width="6.4" height="5.8" viewBox="0 0 6.4 5.8"><rect x="0" y="0" width="6.4" height="5.8" fill="#08080a"/><rect x=".2" y="0" width="6" height="1.6" fill="#d4dde2"/><rect x="5.3" y=".3" width=".8" height=".9" fill="#e8e8f4"/><rect x=".8" y="2.5" width="2.9" height=".8" fill="#28d858"/><rect x=".8" y="3.8" width="1.5" height=".7" fill="#1c9c40"/></svg>
<div class="t" style="left:440.20px;top:220px;line-height:6px;font-size:5.85px;color:#2828a8;transform:translateY(0.55px) rotate(.03deg);letter-spacing:-0.114px;">Bitwig Studio</div>
<svg class="abs" style="left:439.60px;top:227.02px" width="7" height="6.6" viewBox="0 0 7 6.6"><path d="M0 0 L1.6 1.6" stroke="#1c1c1c" stroke-width=".9"/><path d="M1.8 1.8 L4.5 4.3" stroke="#34320e" stroke-width="2.3" stroke-linecap="round"/><path d="M1.8 1.8 L4.5 4.3" stroke="#a09a1e" stroke-width="1.5" stroke-linecap="round"/><path d="M4.5 4.3 L6.8 6.6" stroke="#1c1c1c" stroke-width=".9"/></svg>
<div class="t" style="left:448.20px;top:227px;line-height:6px;font-size:5.85px;color:#1c1cf0;transform:translateY(0.22px) rotate(.03deg);">in_0</div>
<svg class="abs" style="left:439.60px;top:233.68px" width="7" height="6.6" viewBox="0 0 7 6.6"><path d="M0 0 L1.6 1.6" stroke="#1c1c1c" stroke-width=".9"/><path d="M1.8 1.8 L4.5 4.3" stroke="#34320e" stroke-width="2.3" stroke-linecap="round"/><path d="M1.8 1.8 L4.5 4.3" stroke="#a09a1e" stroke-width="1.5" stroke-linecap="round"/><path d="M4.5 4.3 L6.8 6.6" stroke="#1c1c1c" stroke-width=".9"/></svg>
<div class="t" style="left:448.20px;top:233px;line-height:6px;font-size:5.85px;color:#1c1cf0;transform:translateY(0.88px) rotate(.03deg);">in_1</div>
<svg class="abs" style="left:431.20px;top:241.00px" width="6.4" height="5.8" viewBox="0 0 6.4 5.8"><rect x="0" y="0" width="6.4" height="5.8" fill="#08080a"/><rect x=".2" y="0" width="6" height="1.6" fill="#d4dde2"/><rect x="5.3" y=".3" width=".8" height=".9" fill="#e8e8f4"/><rect x=".8" y="2.5" width="2.9" height=".8" fill="#28d858"/><rect x=".8" y="3.8" width="1.5" height=".7" fill="#1c9c40"/></svg>
<div class="t" style="left:440.20px;top:240px;line-height:6px;font-size:5.85px;color:#d4d4e6;transform:translateY(0.55px) rotate(.03deg);letter-spacing:-0.205px;">system</div>
<svg class="abs" style="left:439.60px;top:247.02px" width="7" height="6.6" viewBox="0 0 7 6.6"><path d="M.5 3.3 L3.4 .9 V5.7 Z" fill="#d6d680" stroke="#8c8c3c" stroke-width=".4"/><path d="M3.5 .2 V6.6" stroke="#222" stroke-width=".5"/><path d="M4.2 1.6 H6.4 M4.2 3.3 H6.6 M4.2 5 H6.4" stroke="#8c98a8" stroke-width=".5" stroke-dasharray=".6 .5"/></svg>
<div class="t" style="left:448.20px;top:247px;line-height:6px;font-size:5.85px;color:#1c1cf0;transform:translateY(0.22px) rotate(.03deg);letter-spacing:-0.173px;">playback_1</div>
<svg class="abs" style="left:439.60px;top:253.69px" width="7" height="6.6" viewBox="0 0 7 6.6"><path d="M.5 3.3 L3.4 .9 V5.7 Z" fill="#d6d680" stroke="#8c8c3c" stroke-width=".4"/><path d="M3.5 .2 V6.6" stroke="#222" stroke-width=".5"/><path d="M4.2 1.6 H6.4 M4.2 3.3 H6.6 M4.2 5 H6.4" stroke="#8c98a8" stroke-width=".5" stroke-dasharray=".6 .5"/></svg>
<div class="t" style="left:448.20px;top:253px;line-height:6px;font-size:5.85px;color:#1c1cf0;transform:translateY(0.88px) rotate(.03deg);letter-spacing:-0.173px;">playback_2</div>
<div class="t" style="left:293.30px;top:296px;line-height:6px;font-size:5.85px;color:#a09e98;transform:translateY(0.80px) rotate(.03deg);letter-spacing:-0.018px;text-shadow:.4px .4px 0 #fbfbf8;"><span class="u">C</span>onnecter</div>
<div class="t" style="left:334.50px;top:296px;line-height:6px;font-size:5.85px;color:#111;transform:translateY(0.80px) rotate(.03deg);letter-spacing:-0.016px;"><span class="u">D</span>éconnecter</div>
<div class="t" style="left:382.20px;top:296px;line-height:6px;font-size:5.85px;color:#111;transform:translateY(0.80px) rotate(.03deg);letter-spacing:0.033px;"><span class="u">T</span>out déconnecter</div>
<div class="t" style="left:445.80px;top:296px;line-height:6px;font-size:5.85px;color:#111;transform:translateY(0.80px) rotate(.03deg);letter-spacing:-0.059px;"><span class="u">A</span>fficher tout</div>
<div class="t" style="left:495.50px;top:296px;line-height:6px;font-size:5.85px;color:#111;transform:translateY(0.80px) rotate(.03deg);letter-spacing:-0.111px;"><span class="u">R</span>afraîchir</div>
</div>
</div>
</body>
</html>
